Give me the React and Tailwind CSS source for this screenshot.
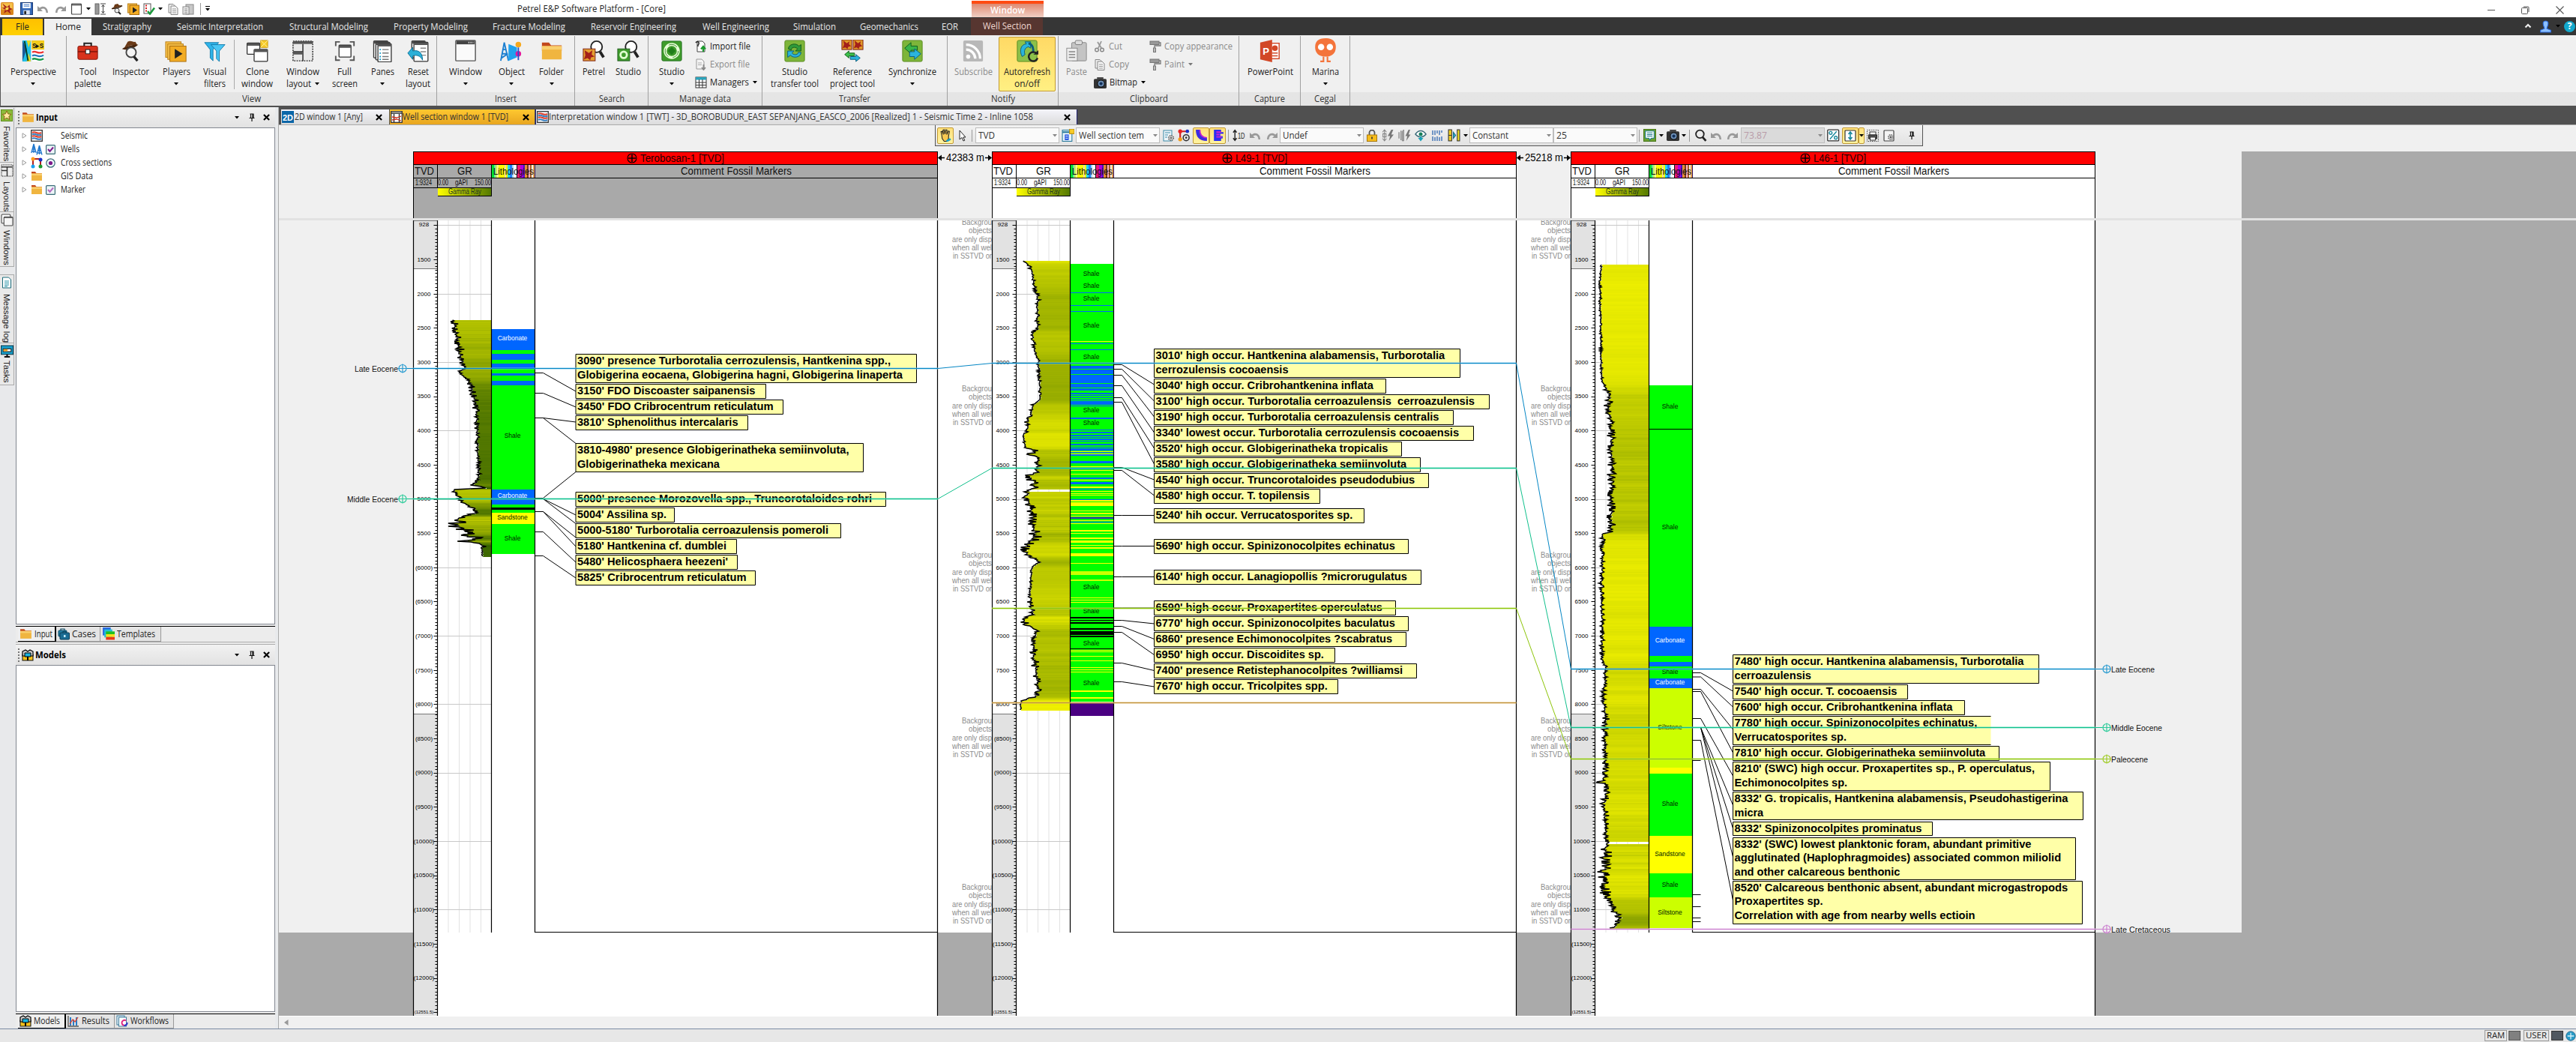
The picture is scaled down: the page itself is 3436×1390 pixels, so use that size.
import React, { useLayoutEffect, useRef } from "react";

/* ---------- text that keeps a given width ---------- */
function Fit({ w, className = "", children }) {
  const ref = useRef(null);
  useLayoutEffect(() => {
    const el = ref.current;
    el.style.transform = "none";
    const natural = el.getBoundingClientRect().width;
    if (natural > 0) el.style.transform = `scaleX(${w / natural})`;
  }, [w, children]);
  return (
    <span className={"inline-block shrink-0 whitespace-nowrap text-left " + className} style={{ width: w }}>
      <span ref={ref} className="inline-block origin-left whitespace-nowrap">{children}</span>
    </span>
  );
}

const Gap = ({ w }) => <span className="shrink-0" style={{ width: w }} />;
const Caret = ({ className = "text-black" }) => (
  <svg viewBox="0 0 6 4" className={"h-[4px] w-[6px] shrink-0 " + className}><path d="M0 0h6L3 3.6z" fill="currentColor" /></svg>
);

/* ---------- icons ---------- */
const Svg = ({ s = 30, v = 32, children, className = "" }) => (
  <svg viewBox={`0 0 ${v} ${v}`} width={s} height={s} fill="none" className={"shrink-0 " + className}>{children}</svg>
);

const PetrelMark = ({ s = 16 }) => (
  <Svg s={s} v={16}>
    <rect x="0" y="0" width="16" height="16" rx="1.5" fill="#d9861c" />
    <rect x="1" y="1" width="14" height="8" fill="#f6c04a" />
    <path d="M2 1.5L8 6l3-3 .5 4L15 8.500l-4 1.500L13 15l-5-4-4 3 1.500-5L1 7l4-.5z" fill="#a3201a" />
    <path d="M6 7l4-1-.5 3.500L6 10z" fill="#ffd94a" />
  </Svg>
);
const StudioMark = ({ s = 28 }) => (
  <Svg s={s}>
    <rect x="1" y="1" width="30" height="30" rx="2" fill="#3f9c2c" stroke="#1d6a1c" />
    <circle cx="16" cy="16" r="10" stroke="#e8ffd8" strokeWidth="4.500" />
    <circle cx="16" cy="16" r="10" stroke="#2b7d20" strokeWidth="1" strokeDasharray="14 7" />
    <path d="M16 10l6 6-6 6-6-6z" fill="#1f7d1a" />
  </Svg>
);
const Folder = ({ s = 17 }) => (
  <Svg s={s}>
    <path d="M2 4h10l3 4h15v8H2z" fill="#c2481c" />
    <path d="M2 9h28v19H2z" fill="#f0b540" />
    <path d="M2 9h28v5H2z" fill="#f9cf6d" />
  </Svg>
);
const Magnifier = ({ children }) => (
  <Svg>
    <circle cx="20" cy="10" r="8" fill="#fff" stroke="#222" strokeWidth="2" />
    <path d="M25 17l5 8" stroke="#222" strokeWidth="4" />
    {children}
  </Svg>
);
const Win = ({ x = 0, y = 0, w = 18, h = 18 }) => (
  <g transform={`translate(${x} ${y})`}>
    <rect x=".7" y=".7" width={w} height={h} rx="1" fill="#fff" stroke="#333" strokeWidth="1.400" />
    <rect x="1" y="1" width={w - 0.6} height="3.500" fill="#555" />
  </g>
);

const I = {
  perspective: (
    <Svg><rect x="1" y="1" width="12" height="30" fill="#20c0e8" /><path d="M1 1l6 12-6 18z" fill="#1b5b9c" /><path d="M7 1l3 10 3-10zM7 31l3-12 3 12z" fill="#e8d820" /><path d="M4 2l5 28" stroke="#053c20" strokeWidth="2" /><rect x="14" y="1" width="18" height="13" fill="#f4cc1c" /><text x="15" y="11.500" fontSize="10" fontWeight="bold" fontFamily="Liberation Sans" fill="#111" textLength="16" lengthAdjust="spacingAndGlyphs">S▸S</text><rect x="15" y="15" width="16" height="16" fill="#fff" /><path d="M15 18c5-4 8 4 16-1" stroke="#e33" strokeWidth="2.500" /><path d="M15 23c5-4 8 4 16-1" stroke="#27b" strokeWidth="2.500" /><path d="M15 28c5-4 8 4 16-1" stroke="#1a9a4a" strokeWidth="2.500" /></Svg>
  ),
  toolbox: (
    <Svg><path d="M11 10V5h10v5" stroke="#222" strokeWidth="2.200" /><rect x="2" y="9" width="28" height="19" rx="2" fill="#d8321c" stroke="#7d1208" /><path d="M2 17h28" stroke="#7d1208" strokeWidth="1.500" /><rect x="13" y="14" width="6" height="6" fill="#fff" stroke="#222" /></Svg>
  ),
  inspector: (
    <Svg><path d="M7 12c4-3 14-6 19-4l-3-5c-4 1-6-3-11 0z" fill="#6b3a17" /><path d="M4 13c6 3 17 0 23-6-7 0-17 2-23 6z" fill="#4a260c" /><circle cx="17" cy="18" r="7" fill="#f4f4f4" stroke="#444" strokeWidth="2" /><path d="M21 24l5 6" stroke="#222" strokeWidth="3.500" /></Svg>
  ),
  players: (
    <Svg><rect x="1" y="3" width="22" height="22" fill="#f7c04a" stroke="#b87d14" /><rect x="4" y="6" width="22" height="22" fill="#f7c04a" stroke="#b87d14" /><rect x="7" y="9" width="23" height="22" fill="#f2ac24" stroke="#a86c10" /><path d="M14 13l11 7-11 7z" fill="#222" /></Svg>
  ),
  filters: (
    <Svg><path d="M2 4h20l-8 10v16l-4-4V14z" fill="#2fb4ea" stroke="#117baa" /><path d="M11 7h20l-8 9v15l-4-4V16z" fill="#49c6f4" stroke="#117baa" /></Svg>
  ),
  clone: (
    <Svg><Win x={1} y={4} w={18} h={16} /><Win x={11} y={13} w={19} h={17} /><rect x="21" y="1" width="10" height="10" fill="#f8cc28" stroke="#c99a10" /><path d="M21 1l10 10M31 1L21 11" stroke="#fff1a8" /></Svg>
  ),
  layout: (
    <Svg><rect x="2" y="2" width="28" height="28" fill="#e9e9e9" stroke="#222" strokeWidth="1.500" strokeDasharray="2 1.500" /><rect x="2" y="2" width="28" height="4" fill="#555" /><path d="M16 6v24M2 17h14" stroke="#222" strokeWidth="1.500" /><rect x="2" y="17" width="14" height="4" fill="#555" /></Svg>
  ),
  full: (
    <Svg><path d="M3 9V3h6M23 3h6v6M29 23v6h-6M9 29H3v-6" stroke="#555" strokeWidth="2" /><Win x={7} y={7} w={17} h={17} /></Svg>
  ),
  panes: (
    <Svg><Win x={3} y={1} w={20} h={24} /><Win x={6} y={3} w={20} h={25} /><Win x={9} y={5} w={19} h={26} /><path d="M12 14h2M12 19h2M12 24h2M12 28h2" stroke="#1a9ac8" strokeWidth="2" /><path d="M16 14h9M16 19h9M16 24h9M16 28h9" stroke="#777" strokeWidth="1.500" /></Svg>
  ),
  reset: (
    <Svg><Win x={6} y={1} w={19} h={24} /><Win x={9} y={3} w={20} h={27} /><path d="M19 12h8M19 17h8M19 22h8" stroke="#888" strokeWidth="1.500" /><path d="M1 19l7-8v5c9-2 14 3 14 13-3-6-8-8-14-6v5z" fill="#2bb0d8" stroke="#0d6f94" /></Svg>
  ),
  window: (<Svg><rect x="2" y="1" width="28" height="29" rx="1" fill="#fafafa" stroke="#555" strokeWidth="1.500" /><rect x="3" y="1.500" width="26" height="5" fill="#444" /><path d="M20 4h7" stroke="#ddd" strokeDasharray="1.500 1.500" strokeWidth="2" /></Svg>),
  object: (
    <Svg><path d="M6 4L1 30M6 4l6 26M3 20h8M4 14h5M2 26l9-6" stroke="#1c7fd0" strokeWidth="2" /><path d="M12 6l12 5v14l-12 5z" fill="#1ea2ee" /><circle cx="26" cy="7" r="4" fill="#f6a81c" /><circle cx="26" cy="20" r="4" fill="#e3169c" /><path d="M26 11v18" stroke="#2255cc" strokeWidth="2" /></Svg>
  ),
  folder: <Folder s={30} />,
  petrel: (<Magnifier><g transform="translate(1 13)"><rect width="17" height="17" fill="#e4a030" stroke="#7a1a10" /><path d="M2 2l6 4 5-4-1 6 4 3-5 1-1 4-4-3-5 2 2-6z" fill="#a3201a" /></g></Magnifier>),
  studio: (<Magnifier><g transform="translate(1 13)"><rect width="17" height="17" fill="#3f9c2c" stroke="#1d5a1c" /><circle cx="8.500" cy="8.500" r="4.500" stroke="#e0ffd0" strokeWidth="3" /></g></Magnifier>),
  studioBig: <StudioMark />,
  transfer: (
    <Svg><rect x="2" y="1" width="28" height="30" rx="2" fill="#7db53a" stroke="#5a8a20" /><path d="M7 13c0-7 11-9 15-4l3-2v9h-8l3-3c-4-4-9-2-9 2z" fill="#2f9a3a" stroke="#145c1c" /><path d="M25 18c0 7-11 9-15 4l-4 3v-9h9l-3 3c4 4 9 2 9-1z" fill="#2bb4dc" stroke="#0c5c7c" /></Svg>
  ),
  reference: (
    <Svg><g transform="translate(1 0)"><rect width="14" height="14" fill="#e09a28" stroke="#7a1a10" /><path d="M2 1l5 4 4-3-1 4 3 3-4 1-1 3-3-2-4 1 2-5z" fill="#a3201a" /></g><g transform="translate(17 0)"><rect width="14" height="14" fill="#e09a28" stroke="#7a1a10" /><path d="M2 1l5 4 4-3-1 4 3 3-4 1-1 3-3-2-4 1 2-5z" fill="#a3201a" /></g><path d="M5 21l6-5v3h8v4h-8v3z" fill="#3ac04a" stroke="#145c1c" /><path d="M27 26l-6-5v3h-8v4h8v3z" fill="#2bb4dc" stroke="#0c5c7c" /></Svg>
  ),
  sync: (
    <Svg><rect x="2" y="1" width="28" height="30" rx="2" fill="#7db53a" stroke="#5a8a20" /><path d="M5 12l9-8v5h9v6h-9v5z" fill="#39b54a" stroke="#0f5a1c" /><path d="M28 20l-9-7v4h-7v7h7v4z" fill="#2bb4dc" stroke="#0c5c7c" /></Svg>
  ),
  subscribe: (
    <Svg><rect x="2" y="1" width="28" height="30" rx="2" fill="#b8b8b8" /><circle cx="9" cy="24" r="3" fill="#fff" /><path d="M6 14c7 0 13 6 13 13M6 7c11 0 20 9 20 20" stroke="#fff" strokeWidth="3.500" /></Svg>
  ),
  refresh: (
    <Svg><rect x="2" y="1" width="28" height="30" rx="2" fill="#8cc04a" stroke="#5a8a20" /><path d="M9 24C4 15 8 6 15 6l-2-3h8v9l-3-2c-5 1-7 6-5 11z" fill="#2bb4dc" stroke="#0c5c7c" /><path d="M18 5c6 2 8 8 6 14" stroke="#0c5c7c" strokeWidth="3" /><path d="M30 20a6.500 6.500 0 1 0 1 6" stroke="#222" strokeWidth="2.600" /><path d="M25 21h7v-6z" fill="#222" /></Svg>
  ),
  paste: (
    <Svg><rect x="9" y="4" width="21" height="26" rx="1.500" fill="#c4c4c4" stroke="#888" /><rect x="14" y="1" width="10" height="6" rx="2" fill="#ddd" stroke="#777" /><rect x="2" y="12" width="15" height="18" fill="#eee" stroke="#888" /><path d="M5 17h9M5 21h9M5 25h9" stroke="#888" strokeWidth="1.600" /></Svg>
  ),
  ppt: (
    <Svg><rect x="17" y="5" width="12" height="22" fill="#fff" stroke="#d24726" strokeWidth="1.500" /><circle cx="23" cy="12" r="4" fill="#d24726" /><path d="M19 19h8M19 23h8" stroke="#d24726" strokeWidth="1.600" /><path d="M2 4l17-4v32L2 28z" fill="#d24726" /><text x="5.500" y="21.500" fontSize="14" fontWeight="bold" fontFamily="Liberation Sans" fill="#fff">P</text></Svg>
  ),
  marina: (
    <Svg s={34}><path d="M16 0c9 0 13 4 13 11s-4 12-13 12S3 18 3 11 7 0 16 0z" fill="#f4743b" /><circle cx="10.500" cy="11" r="4" fill="#fff" /><circle cx="21.500" cy="11" r="4" fill="#fff" /><path d="M13.500 23v6h-4M18.500 23v6h4" stroke="#f4743b" strokeWidth="2" /></Svg>
  ),
};

const S = {
  save: (<Svg s={17} v={16}><rect x=".5" y=".5" width="15" height="15" fill="#3468b8" stroke="#1c3c78" /><rect x="3" y="1" width="10" height="6.500" fill="#fff" /><path d="M4.500 3h7M4.500 5h7" stroke="#4a7cc8" /><rect x="4" y="10" width="8" height="5.500" fill="#d8e2f2" /><rect x="5" y="11" width="2.500" height="4" fill="#222" /></Svg>),
  undo: (<Svg s={16} v={16}><path d="M1 4v7h7L5.500 8.500C9 6 12.500 8 12.500 13H15C15 5 8 2.500 3.800 6.600z" fill="#999" /></Svg>),
  redo: (<Svg s={16} v={16}><path d="M15 4v7H8l2.500-2.500C7 6 3.500 8 3.500 13H1C1 5 8 2.500 12.200 6.600z" fill="#999" /></Svg>),
  page: (<Svg s={16} v={16}><rect x="1.500" y="1" width="13" height="14" rx="1" fill="#fff" stroke="#444" strokeWidth="1.200" /><path d="M2 2.500h12" stroke="#444" strokeWidth="1.500" /></Svg>),
  height: (<Svg s={16} v={16}><rect x="1" y="1" width="5" height="14" fill="#999" stroke="#666" /><path d="M8 1h7M8 15h7M11.500 3v10M9.500 5l2-2.500 2 2.500M9.500 11l2 2.500 2-2.500" stroke="#444" /></Svg>),
  hat: (<Svg s={16} v={16}><path d="M2 7c3 0 9-2 12-4l-3 0-2-2-4 1-1 3z" fill="#6b3a17" /><path d="M1 7.500c5 0 10-1.500 14-4" stroke="#3c1e08" strokeWidth="1.500" /><circle cx="8" cy="10" r="3" fill="#eee" stroke="#444" /><path d="M10 12l3 3" stroke="#222" strokeWidth="2" /></Svg>),
  play: (<Svg s={16} v={16}><rect x=".5" y="1" width="12" height="12" fill="#f7c04a" stroke="#b87d14" /><rect x="3" y="3" width="12.500" height="12.500" fill="#f2ac24" stroke="#a86c10" /><path d="M7 5.500l6 4-6 4z" fill="#222" /></Svg>),
  check: (<Svg s={16} v={16}><rect x="1" y="1" width="9" height="13" fill="#fff" stroke="#555" /><path d="M3 3.500h2M3 7h2M3 10.500h2" stroke="#d22" strokeWidth="2" /><path d="M6 11l3 3.500 6-8" stroke="#1a9a3c" strokeWidth="2.500" /></Svg>),
  copy: (<Svg s={16} v={16}><path d="M2 1.500h6l3 3V13H2z" fill="#eee" stroke="#888" /><path d="M5 4h6l3 3v8.500H5z" fill="#f4f4f4" stroke="#888" /><path d="M7 8h5M7 10.500h5M7 13h5" stroke="#999" /></Svg>),
  clip: (<Svg s={16} v={16}><rect x="5" y="2" width="10" height="13" fill="#c8c8c8" stroke="#888" /><rect x="1" y="5" width="8" height="10" fill="#eee" stroke="#888" /><path d="M3 8h4M3 10.500h4M3 13h4" stroke="#888" /></Svg>),
  imp: (<Svg s={16} v={16}><path d="M3 1h7l3 3v11H3z" fill="#fff" stroke="#444" /><path d="M11 15V9M8 11.500L11 8l3 3.500" stroke="#1a9a2c" strokeWidth="2.200" /><path d="M1 3c3-4 6 1 3 3v2" stroke="#222" strokeWidth="1.500" /></Svg>),
  exp: (<Svg s={16} v={16}><path d="M2 1h7l3 3v10H2z" fill="#f4f4f4" stroke="#999" /><path d="M4 6h5M4 8.500h5" stroke="#aaa" /><path d="M11.500 8v6M9 12l2.500 3 2.500-3" stroke="#888" strokeWidth="1.800" /></Svg>),
  grid: (<Svg s={16} v={16}><rect x="1" y="1" width="14" height="14" fill="#fff" stroke="#333" /><rect x="1" y="1" width="14" height="3.500" fill="#2ba4bc" /><path d="M1 8h14M1 11.500h14M5.500 4v11M10 4v11" stroke="#333" /></Svg>),
  cut: (<Svg s={16} v={16}><path d="M10 1L6 10M5 2l5 8" stroke="#999" strokeWidth="1.800" /><circle cx="4" cy="12.500" r="2.300" stroke="#888" strokeWidth="1.400" /><circle cx="11" cy="12.500" r="2.300" stroke="#888" strokeWidth="1.400" /></Svg>),
  camera: (<Svg s={17} v={16}><rect x="0" y="3" width="16" height="12" rx="1.500" fill="#333" /><rect x="4" y="1" width="8" height="3" fill="#444" /><circle cx="9" cy="9" r="4.300" fill="#6d8fb5" stroke="#111" /><circle cx="9" cy="9" r="2" fill="#12305a" /></Svg>),
  roller: (<Svg s={16} v={16}><rect x="1" y="1" width="12" height="4.500" fill="#999" stroke="#777" /><path d="M13 3h2v4H7v3" stroke="#777" strokeWidth="1.300" /><rect x="5.500" y="10" width="3" height="5.500" fill="#bbb" stroke="#777" /></Svg>),
  star: (<Svg s={16} v={16}><rect x=".5" y=".5" width="15" height="15" fill="#8cbc3c" stroke="#5f8c1c" /><path d="M8 2l1.800 4 4.200.4-3.200 2.800 1 4.300L8 11.200 4.200 13.500l1-4.300L2 6.400 6.200 6z" fill="#ffe9a0" stroke="#8a5a10" strokeWidth=".9" /></Svg>),
  layouts: (<Svg s={17} v={16}><rect x="1" y="1" width="14" height="14" fill="#eee" stroke="#000" strokeDasharray="1 1" /><path d="M1 3.500h14M8 4v11M1 8h7" stroke="#333" strokeWidth="1.400" /></Svg>),
  windows: (<Svg s={17} v={16}><rect x="1" y="1" width="11" height="11" rx="1" fill="#fff" stroke="#444" /><rect x="4" y="4" width="11" height="11" rx="1" fill="#f6f6f6" stroke="#444" /><path d="M4 5h11" stroke="#444" /></Svg>),
  doc: (<Svg s={16} v={16}><path d="M2.500 1h8l3 3v11h-11z" fill="#fff" stroke="#1a6a7a" /><path d="M5 6h6M5 8.500h6M5 11h6M5 13h4" stroke="#1a8aa0" /></Svg>),
  tasks: (<Svg s={17} v={16}><rect x=".5" y="1" width="15" height="11" fill="#18a0cc" stroke="#0a3a4c" /><rect x="3" y="5" width="10" height="3.500" fill="#fff" stroke="#222" /><rect x="3.500" y="5.500" width="5" height="2.500" fill="#f0a020" /><path d="M8 12v3M4.500 15h7" stroke="#111" strokeWidth="2" /></Svg>),
  seismic: (<Svg s={16} v={16}><rect x=".7" y=".7" width="14.600" height="14.600" fill="#fff" stroke="#333" strokeWidth="1.300" /><path d="M2 4c4-3 7 3 12 0M2 9c4-3 7 3 12 0" stroke="#e0402c" strokeWidth="2.200" /><path d="M2 6.500c4-3 7 3 12 0M2 12c4-3 7 3 12 0" stroke="#3a80c0" strokeWidth="2.200" /></Svg>),
  wells: (<Svg s={16} v={16}><path d="M4 1L.8 13M4 1l3.200 12M4 1v12M2 8h4M1 11h6" stroke="#1f76cc" strokeWidth="1.300" /><path d="M11.500 3L8 15.500M11.500 3L15 15.500M11.500 3v12M9.500 10h4M8.500 13h6" stroke="#1f76cc" strokeWidth="1.300" /></Svg>),
  cross: (<Svg s={16} v={16}><path d="M3 13V3h10v10" stroke="#b02020" strokeWidth="2" /><circle cx="3" cy="3" r="2.500" fill="#ff9c1a" /><circle cx="13" cy="4" r="2.500" fill="#1a30c8" /><circle cx="3" cy="13" r="2.500" fill="#1aa0f0" /><circle cx="13" cy="13" r="2.500" fill="#1a9a2c" /></Svg>),
  cases: (<Svg s={16} v={16}><rect x="1" y="3" width="11" height="8" rx="1" fill="#2482a8" stroke="#0c4a66" /><path d="M4 3V1h5v2M7 6V4.500h4V6" stroke="#0c4a66" strokeWidth="1.200" /><rect x="3" y="6" width="12.500" height="9" rx="1" fill="#1a6d94" stroke="#0a3c54" /><rect x="8" y="9" width="2.500" height="3" fill="#bfe8f8" /></Svg>),
  templates: (<Svg s={17} v={16}><rect x="1" y="0" width="10" height="10" fill="#2a6ae0" /><rect x="3" y="2.500" width="10" height="10" fill="#20c0d8" /><rect x="5" y="5" width="11" height="3.500" fill="#20c020" /><rect x="5" y="8.500" width="11" height="3.500" fill="#f6e01c" /><rect x="5" y="12" width="11" height="3.500" fill="#e83818" /></Svg>),
  models: (<Svg s={16} v={16}><rect x="1" y="7" width="14" height="8" fill="#f4c01c" stroke="#111" /><path d="M1 3l4-2 3 2 3-2 4 2v6H1z" fill="#ccc" stroke="#000" strokeWidth="1.200" /><path d="M4 5h8v5H4z" fill="#18b4e0" stroke="#000" /><path d="M8 10v5" stroke="#000" strokeWidth="2" /></Svg>),
  results: (<Svg s={16} v={16}><path d="M1 1v14h14" stroke="#555" strokeWidth="1.300" /><path d="M3 3h2v11H3zM7 6h2v8H7zM11 3h2v11h-2z" fill="#2a7cc8" /><path d="M3 12l4-6 3 3 4-6" stroke="#e0402c" strokeWidth="1.300" /></Svg>),
  workflows: (<Svg s={16} v={16}><rect x="1" y="1" width="10" height="12" fill="#eef6fa" stroke="#3a7a9c" /><rect x="3.500" y="3" width="10" height="12" fill="#fff" stroke="#3a7a9c" /><path d="M13 7.500a3.500 3.500 0 1 0 1.500 3" stroke="#e02880" strokeWidth="2" /><path d="M14.500 10a3.500 3.500 0 0 1-4 4" stroke="#2040d0" strokeWidth="2" /></Svg>),
  twoD: (<Svg s={16} v={16}><rect width="16" height="16" fill="#0b66a8" /><text x="1" y="12.500" fontSize="11.500" fontWeight="bold" fontFamily="Liberation Sans" fill="#fff" textLength="14" lengthAdjust="spacingAndGlyphs">2D</text></Svg>),
  wellsec: (<Svg s={16} v={16}><rect x=".7" y=".7" width="14.600" height="14.600" fill="#fff" stroke="#333" strokeWidth="1.300" /><path d="M1 3h14" stroke="#333" strokeWidth="1.500" /><path d="M4.500 4v11M11.500 4v11" stroke="#222" strokeWidth="1.300" /><path d="M2 8l6 1 6-2M2 12l6-1 6 2" stroke="#d03020" strokeWidth="1.300" /></Svg>),
  hand: (<Svg s={17} v={16}><path d="M3 8L2 3.500l1.500-.5L5 7l-.5-5.500L6 1l1 5.500L8 1l1.500.3L9.300 7l2-4.500 1.300.7L11.500 9v3l-2 3.500H6L3.500 12z" fill="#f8c850" stroke="#222" strokeWidth="1" /><path d="M9 15.500l5-3" stroke="#18a0cc" strokeWidth="2.500" /></Svg>),
  cursor: (<Svg s={16} v={16}><path d="M5 1v12l3-2.500L10 15l1.800-.8L9.800 10H13z" fill="#fff" stroke="#222" /></Svg>),
  tpl: (<Svg s={17} v={16}><rect x="1" y="1.500" width="12" height="14" fill="#e8f4fa" stroke="#2a7a9c" /><path d="M1 4h12" stroke="#2a7a9c" strokeWidth="2" /><rect x="4" y="7" width="5" height="7" fill="#2050e0" /><path d="M5 9h3M5 11.500h3" stroke="#fff" /><rect x="10" y="0" width="6" height="6" fill="#f8cc28" stroke="#b88a10" /></Svg>),
  tplGear: (<Svg s={16} v={16}><rect x="1" y="1" width="11" height="14" fill="#eef6fa" stroke="#3a8aa8" /><path d="M3 4h7M3 7h4M3 10h3" stroke="#3a8aa8" /><circle cx="11" cy="11" r="3.200" fill="#ddd" stroke="#666" strokeWidth="1.800" strokeDasharray="1.500 1" /><circle cx="11" cy="11" r="1.300" fill="#666" /></Svg>),
  crossGear: (<Svg s={17} v={16}><path d="M3 13V3h9" stroke="#d02020" strokeWidth="2" /><circle cx="3" cy="3" r="2.500" fill="#e82020" /><circle cx="12" cy="3" r="2.200" fill="#1a30c8" /><circle cx="3" cy="13" r="2.500" fill="#f09c1a" /><circle cx="10.500" cy="11" r="3.700" fill="#eee" stroke="#333" strokeWidth="1.500" /><circle cx="10.500" cy="11" r="1.300" fill="#333" /></Svg>),
  curve: (<Svg s={17} v={16}><path d="M1 1h5c0 6 2 10 9 10v4C5 15 1 10 1 1z" fill="#3c2ce0" /><path d="M6 1c0 6 2 10 9 10" stroke="#c020d0" strokeWidth="1.500" /></Svg>),
  hist: (<Svg s={17} v={16}><path d="M3 1h9v3h3v2h-4v3h3v3h-2v3H3z" fill="#2a30f0" /><path d="M6 4h6M6 7h4M6 10h7" stroke="#d020d0" strokeWidth="1.800" /></Svg>),
  oneD: (<Svg s={17} v={16}><path d="M3 2v12M.8 4.500L3 1.500l2.200 3M.8 11.500L3 14.500l2.200-3" stroke="#222" strokeWidth="1.300" /><text x="6.500" y="12" fontSize="9.500" fontFamily="Liberation Sans" fill="#222" textLength="9" lengthAdjust="spacingAndGlyphs">1D</text></Svg>),
  lock: (<Svg s={16} v={16}><path d="M4.500 7V4a3.500 3.500 0 0 1 7 0v3" stroke="#555" strokeWidth="1.800" /><rect x="1.500" y="7" width="13" height="8.500" fill="#f6bc1c" stroke="#a8780c" /><path d="M8 9.500v3" stroke="#333" strokeWidth="1.600" /></Svg>),
  bolt1: (<Svg s={17} v={16}><path d="M3.500 1v14M1 4l2.500-3L6 4M1 12l2.500 3L6 12M1.500 6h4v4h-4z" stroke="#888" /><path d="M12 1L7.500 9h3L9 15l6-8h-3l2.500-6z" fill="#777" /></Svg>),
  bolt2: (<Svg s={17} v={16}><path d="M1 4v8M3.500 2v12" stroke="#888" strokeWidth="1.300" /><path d="M7 1v14H5V3z" fill="#aaa" stroke="#777" strokeWidth=".7" /><path d="M13 1L9 9h2.500L10 15l5.500-8H13l2-6z" fill="#777" /></Svg>),
  eye: (<Svg s={16} v={16}><path d="M1 6c4-6 10-6 14 0-4 5-10 5-14 0z" fill="#fff" stroke="#3a6a78" strokeWidth="1.500" /><circle cx="8" cy="6" r="2.500" fill="#18805c" /><path d="M4.500 11H7V9h2v2h2.500L8 15.500z" fill="#18a0b8" /></Svg>),
  bars: (<Svg s={16} v={16}><path d="M2 1v6M5 1v6M8 1v4M11 1v6M14 1v3M2 9v6M5 10v5M8 9v6M11 10v5M14 9v6" stroke="#4a7ab8" strokeWidth="1.500" /></Svg>),
  flow: (<Svg s={17} v={16}><rect x="1" y="1" width="4" height="14" fill="#f4d020" stroke="#333" /><path d="M1 8h4" stroke="#333" /><path d="M7 4l3 4-3 4z" fill="#28b0d0" stroke="#1a6a80" /><rect x="12" y="1" width="3" height="14" fill="#f4e020" stroke="#333" /></Svg>),
  note: (<Svg s={17} v={16}><rect x=".5" y=".5" width="15" height="15" fill="#6ca030" stroke="#4a7a1c" /><path d="M2.500 2.500h11v9H10l-2 2.500-1-2.500H2.500z" fill="#fff" stroke="#18788c" /><path d="M4.500 5h7M4.500 7h7M4.500 9h7" stroke="#18788c" /></Svg>),
  search: (<Svg s={17} v={16}><circle cx="7" cy="6.500" r="5" stroke="#222" strokeWidth="1.700" /><path d="M10.500 10.500l4 4.500" stroke="#222" strokeWidth="2.600" /></Svg>),
  pct: (<Svg s={17} v={16}><rect x=".7" y="1" width="14" height="14" rx="1" fill="#fff" stroke="#333" strokeWidth="1.200" /><circle cx="4.500" cy="5" r="1.800" stroke="#18889c" strokeWidth="1.300" /><circle cx="11" cy="11" r="1.800" stroke="#18889c" strokeWidth="1.300" /><path d="M12 3L3.500 13" stroke="#18889c" strokeWidth="1.300" /></Svg>),
  vfit: (<Svg s={16} v={16}><rect x="1" y="1" width="14" height="14" rx="1" fill="#fff" stroke="#333" strokeWidth="1.200" /><path d="M8 3.500v9M5.500 6L8 3l2.500 3M5.500 10L8 13l2.500-3" stroke="#18889c" strokeWidth="1.600" /></Svg>),
  print: (<Svg s={16} v={16}><rect x=".5" y=".5" width="15" height="15" stroke="#222" strokeDasharray="1 1.500" /><rect x="4" y="3" width="8" height="4" fill="#fff" stroke="#333" /><rect x="2.500" y="7" width="11" height="5" fill="#555" stroke="#222" /><rect x="4.500" y="10" width="7" height="4" fill="#fff" stroke="#333" /></Svg>),
  pageGear: (<Svg s={16} v={16}><rect x="1" y="1" width="13" height="14" rx="1" fill="#f4f4f4" stroke="#444" strokeWidth="1.200" /><circle cx="10" cy="10" r="3.200" fill="#ccc" stroke="#777" strokeWidth="1.800" strokeDasharray="1.500 1" /><circle cx="10" cy="10" r="1.200" fill="#555" /></Svg>),
  pin: (<Svg s={12} v={12}><path d="M3.500 1h5M4.500 1v5.500M8 1v5.500M7 1v5M2.500 6.500h7M6 6.500V11" stroke="#111" strokeWidth="1.200" /></Svg>),
  close: (<Svg s={9} v={10}><path d="M1 1l8 8M9 1L1 9" stroke="#000" strokeWidth="2.400" /></Svg>),
};

/* ---------- title bar and ribbon tabs ---------- */
function TitleBar() {
  return (
    <div className="relative flex h-[23px] w-full items-center bg-white">
      <Gap w={1} /><PetrelMark s={17} /><Gap w={9} />{S.save}<Gap w={5} />{S.undo}<Gap w={8} />{S.redo}<Gap w={5} />{S.page}
      <Gap w={5} /><Caret /><Gap w={5} />{S.height}<Gap w={6} />{S.hat}<Gap w={6} />{S.play}<Gap w={5} />{S.check}<Gap w={4} /><Caret />
      <Gap w={6} />{S.copy}<Gap w={4} />{S.clip}<Gap w={8} /><span className="h-[16px] w-px bg-[#999]" /><Gap w={6} />
      <span className="flex flex-col items-center gap-[2px]"><span className="h-px w-[6px] bg-black" /><Caret /></span>
      <Gap w={410} />
      <Fit w={198} className="text-[12px] text-[#222]">Petrel E&P Software Platform - [Core]</Fit>
      <Gap w={408} />
      <div className="mt-px flex h-[22px] w-[96px] items-center justify-center border-t-4 border-[#ff4b12] bg-linear-to-b from-[#de8a72] to-[#f0cfc4]">
        <Fit w={46} className="text-[12px] font-semibold text-white">Window</Fit>
      </div>
      <div className="ml-auto flex items-center pr-[16px] pt-[4px] text-[#555]">
        <span className="h-px w-[10px] bg-[#555]" /><Gap w={35} />
        <Svg s={11} v={11}><rect x=".5" y="2.500" width="8" height="8" rx="1" stroke="#555" /><path d="M3 1h6a1 1 0 0 1 1 1v6" stroke="#555" /></Svg><Gap w={35} />
        <Svg s={11} v={11}><path d="M.5.5l10 10M10.500.5l-10 10" stroke="#555" strokeWidth="1.100" /></Svg>
      </div>
    </div>
  );
}

const TABS = [["Stratigraphy", 65], ["Seismic Interpretation", 115], ["Structural Modeling", 105], ["Property Modeling", 99], ["Fracture Modeling", 97], ["Reservoir Engineering", 114], ["Well Engineering", 89], ["Simulation", 57], ["Geomechanics", 78], ["EOR", 22]];
const TAB_GAPS = [15, 34, 35, 34, 33, 34, 35, 32, 32, 31];

function TabBar() {
  return (
    <div className="flex h-[24px] w-full items-center bg-[#363636] text-[12px] text-[#e6e6e6]">
      <div className="ml-[3px] mt-[2px] flex h-[22px] w-[54px] items-center justify-center bg-linear-to-b from-[#ffc000] to-[#ffd000] text-[#222]"><Fit w={18}>File</Fit></div>
      <div className="ml-[2px] mt-[2px] flex h-[22px] w-[63px] items-center justify-center bg-[#f0f0f0] text-[#222]"><Fit w={34}>Home</Fit></div>
      {TABS.map(([t, w], i) => (
        <React.Fragment key={t}><Gap w={TAB_GAPS[i]} /><Fit w={w} className="mt-px">{t}</Fit></React.Fragment>
      ))}
      <Gap w={17} />
      <div className="flex h-[23px] w-[96px] items-center justify-center bg-[#573630] text-[#f0d8d0]"><Fit w={65}>Well Section</Fit></div>
      <div className="ml-auto flex items-center pr-[1px]">
        <Svg s={10} v={10}><path d="M1.500 6.500L5 3l3.500 3.500" stroke="#eee" strokeWidth="2.200" /></Svg><Gap w={10} />
        <Svg s={17} v={16}><path d="M8 1c3 0 3.500 2 3 4.500S9.500 9 9.500 10.500l5 2V15h-13v-2.500l5-2C6.500 9 5.500 8 5 5.500S5 1 8 1z" fill="#8cc0ff" stroke="#2a6ae0" /></Svg>
        <Gap w={5} /><Caret /><Gap w={5} />
        <span className="flex h-[15px] w-[15px] items-center justify-center rounded-full bg-[#12a8cc] text-[12px] font-bold text-white">?</span>
      </div>
    </div>
  );
}

/* ---------- ribbon ---------- */
function Big({ w, icon, a, aw, b, bw, caret, inlineCaret, gray, hot }) {
  return (
    <div className={"flex h-[73px] shrink-0 flex-col items-center text-[12px] leading-[16px] " + (gray ? "text-[#8a8a8a]" : "text-[#222]") + (hot ? " rounded-[2px] bg-linear-to-b from-[#ffd964] to-[#fff083] outline outline-1 -outline-offset-1 outline-[#c29a35]" : "")} style={{ width: w }}>
      <div className="mt-[3px] flex h-[32px] items-center justify-center">{I[icon]}</div>
      <div className="mt-[4px] h-[16px]"><Fit w={aw}>{a}</Fit></div>
      <div className="flex h-[16px] items-center">{b && <Fit w={bw}>{b}</Fit>}{inlineCaret && <><Gap w={5} /><Caret /></>}{caret && <Caret />}</div>
    </div>
  );
}
function Small({ icon, t, w, gray, caret }) {
  return (
    <div className={"flex h-[24px] items-center text-[12px] " + (gray ? "text-[#8a8a8a]" : "text-[#222]")}>
      {S[icon]}<Gap w={4} /><Fit w={w}>{t}</Fit>{caret && <><Gap w={5} /><Caret className={gray ? "text-[#777]" : "text-black"} /></>}
    </div>
  );
}
function Group({ w, label, lw, children }) {
  return (
    <div className="h-full shrink-0 pt-px" style={{ width: w }}>
      <div className="flex h-[93px] flex-col border-r border-[#a0a0a0]">
        <div className="flex h-[75px] pt-px">{children}</div>
        <div className="flex h-[18px] items-center justify-center text-[12px] text-[#333]">{label && <Fit w={lw}>{label}</Fit>}</div>
      </div>
    </div>
  );
}
function Ribbon() {
  return (
    <div className="flex h-[94px] w-full bg-linear-to-b from-[#f0f0f0] from-81% to-[#e5e5e5] to-81% border-l border-[#555]">
      <Group w={88}><Gap w={0} /><Big w={86} icon="perspective" a="Perspective" aw={61} caret /></Group>
      <Group w={494} label="View" lw={25}>
        <Big w={56} icon="toolbox" a="Tool" aw={23} b="palette" bw={36} /><Big w={58} icon="inspector" a="Inspector" aw={49} />
        <Big w={64} icon="players" a="Players" aw={37} caret /><Big w={38} icon="filters" a="Visual" aw={31} b="filters" bw={29} />
        <div className="flex w-[14px] justify-center py-[4px]"><span className="w-px bg-[#aaa]" /></div>
        <Big w={48} icon="clone" a="Clone" aw={31} b="window" bw={42} /><Big w={74} icon="layout" a="Window" aw={44} b="layout" bw={33} inlineCaret />
        <Big w={37} icon="full" a="Full" aw={19} b="screen" bw={34} /><Big w={64} icon="panes" a="Panes" aw={31} caret /><Big w={31} icon="reset" a="Reset" aw={28} b="layout" bw={33} />
      </Group>
      <Group w={184} label="Insert" lw={29}>
        <Big w={76} icon="window" a="Window" aw={44} caret /><Big w={46} icon="object" a="Object" aw={35} caret /><Big w={61} icon="folder" a="Folder" aw={33} caret />
      </Group>
      <Group w={98} label="Search" lw={34}>
        <Big w={50} icon="petrel" a="Petrel" aw={30} /><Big w={42} icon="studio" a="Studio" aw={34} />
      </Group>
      <Group w={152} label="Manage data" lw={69}>
        <Big w={62} icon="studioBig" a="Studio" aw={34} caret />
        <div className="pt-px"><Small icon="imp" t="Import file" w={54} /><Small icon="exp" t="Export file" w={53} gray /><Small icon="grid" t="Managers" w={52} caret /></div>
      </Group>
      <Group w={247} label="Transfer" lw={42}>
        <Big w={86} icon="transfer" a="Studio" aw={34} b="transfer tool" bw={64} /><Big w={68} icon="reference" a="Reference" aw={52} b="project tool" bw={60} /><Big w={92} icon="sync" a="Synchronize" aw={64} caret />
      </Group>
      <Group w={148} label="Notify" lw={32}>
        <Big w={68} icon="subscribe" a="Subscribe" aw={51} gray /><Big w={76} icon="refresh" a="Autorefresh" aw={62} b="on/off" bw={34} hot />
      </Group>
      <Group w={241} label="Clipboard" lw={51}>
        <Big w={47} icon="paste" a="Paste" aw={28} gray />
        <div className="w-[74px] pt-px"><Small icon="cut" t="Cut" w={18} gray /><Small icon="copy" t="Copy" w={27} gray /><Small icon="camera" t="Bitmap" w={37} caret /></div>
        <div className="pt-px"><Small icon="roller" t="Copy appearance" w={91} gray /><Small icon="roller" t="Paint" w={27} gray caret /></div>
      </Group>
      <Group w={82} label="Capture" lw={41}><Big w={82} icon="ppt" a="PowerPoint" aw={61} /></Group>
      <Group w={66} label="Cegal" lw={29}><Big w={65} icon="marina" a="Marina" aw={36} caret /></Group>
    </div>
  );
}

/* ---------- left side ---------- */
const RAIL = [["star", "Favorites", 73, 6], ["layouts", "Layouts", 66, 6], ["windows", "Windows", 73, 5], null, ["doc", "Message log", 91, 7], ["tasks", "Tasks", 56, 4]];
function Rail() {
  return (
    <div className="h-full w-[21px] bg-[#e8e9eb] pt-px font-['Liberation_Sans',sans-serif]">
      {RAIL.map((r, i) =>
        r ? (
          <div key={i} className="flex w-[19px] flex-col items-center border-b border-r border-[#aaa] bg-[#e9e9e9] pt-[2px]" style={{ height: r[2] }}>
            {S[r[0]]}
            <span className="whitespace-nowrap text-[11.500px] leading-[14px] text-[#222] [writing-mode:vertical-rl]" style={{ marginTop: r[3] }}>{r[1]}</span>
          </div>
        ) : <div key={i} className="h-[11px] w-[19px] border-b border-[#aaa]" />
      )}
    </div>
  );
}
const Head = ({ icon, t, w }) => (
  <div className="flex h-full items-center bg-linear-to-b from-[#f2f2f2] to-[#e2e2e2] pl-[3px] text-[12px] font-bold">
    <span className="h-[18px] w-0 border-l-2 border-dotted border-[#777]" /><Gap w={3} />{icon}<Gap w={2} /><Fit w={w}>{t}</Fit>
    <div className="ml-auto flex items-center pr-[7px]"><Caret /><span className="w-[3px]" /><Gap w={8} />{S.pin}<Gap w={9} />{S.close}</div>
  </div>
);
const Tree = ({ icon, box, t, w }) => (
  <div className="flex h-[18px] items-center text-[12px] text-[#222]">
    <Gap w={7} /><Svg s={8} v={8}><path d="M1 .8v6.400l5-3.200z" stroke="#999" /></Svg><Gap w={4} />{icon}<Gap w={4} />
    <span className="flex w-[13px] shrink-0">{box}</span><Gap w={7} /><Fit w={w}>{t}</Fit>
  </div>
);
const CheckBox = ({ c = "#7d1a8c" }) => (<Svg s={13} v={13}><rect x=".6" y=".6" width="11.800" height="11.800" rx="1" fill="#eef6f8" stroke="#3a6c78" strokeWidth="1.200" /><path d="M3 6l2.500 3L10 3.500" stroke={c} strokeWidth="2" /></Svg>);
const BTab = ({ icon, t, w, tw, on }) => (
  <div className={"flex h-full items-center text-[12px] text-[#222] " + (on ? "border-b border-r-2 border-black bg-[#efefef]" : "border-b border-r border-[#999] bg-[#e4e4e4]")} style={{ width: w }}>
    <Gap w={2} />{icon}<Gap w={3} /><Fit w={tw}>{t}</Fit>
  </div>
);
function LeftPanels() {
  return (
    <div className="flex h-full w-[346px] flex-col bg-[#ececec]">
      <div className="h-[27px]"><Head icon={<Folder />} t="Input" w={29} /></div>
      <div className="h-[663px] border border-[#828790] bg-white pt-[1px]">
        <Tree icon={S.seismic} t="Seismic" w={36} />
        <Tree icon={S.wells} box={<CheckBox />} t="Wells" w={25} />
        <Tree icon={S.cross} box={<Svg s={13} v={13}><circle cx="6.500" cy="6.500" r="5.700" fill="#eef6f8" stroke="#3a6c78" strokeWidth="1.200" /><circle cx="6.500" cy="6.500" r="2.600" fill="#7d1a8c" /></Svg>} t="Cross sections" w={68} />
        <Tree icon={<Folder s={16} />} t="GIS Data" w={43} />
        <Tree icon={<Folder s={16} />} box={<CheckBox c="#b46cc0" />} t="Marker" w={33} />
      </div>
      <div className="mt-[2px] flex h-[21px] border-t border-black pl-[3px]">
        <BTab on w={51} icon={<Folder />} t="Input" tw={24} /><BTab w={59} icon={S.cases} t="Cases" tw={32} /><BTab w={81} icon={S.templates} t="Templates" tw={51} />
      </div>
      <div className="h-px bg-[#aaa]" />
      <div className="mt-[2px] h-[28px] border-t border-[#aaa]"><Head icon={S.models} t="Models" w={41} /></div>
      <div className="h-[463px] border border-[#828790] bg-white" />
      <div className="mt-[2px] flex h-[20px] border-t border-black pl-[3px]">
        <BTab on w={64} icon={S.models} t="Models" tw={35} /><BTab w={65} icon={S.results} t="Results" tw={37} /><BTab w={79} icon={S.workflows} t="Workflows" tw={51} />
      </div>
    </div>
  );
}

/* ---------- document tabs and tool strip ---------- */
function DocTabs() {
  return (
    <div className="flex h-[24px] w-full shrink-0 items-end border-b border-[#aaa] bg-[#505050] pl-[3px] text-[12px] text-[#333]">
      <div className="flex h-[20px] w-[144px] items-center bg-linear-to-b from-[#f4f4fa] to-[#dcdcdc] pl-[1px]">{S.twoD}<Gap w={1} /><Fit w={91}>2D window 1 [Any]</Fit><Gap w={17} />{S.close}</div>
      <div className="ml-px flex h-[20px] w-[193px] items-center bg-linear-to-b from-[#ffc830] to-[#e8a620] pl-[1px]">{S.wellsec}<Fit w={141}>Well section window 1 [TVD]</Fit><Gap w={19} />{S.close}</div>
      <div className="ml-px flex h-[20px] w-[723px] items-center border-l border-r border-[#1a1a6c] bg-linear-to-b from-[#f4f4fa] to-[#dcdcdc] pl-[1px]">{S.seismic}<Fit w={646}>Interpretation window 1 [TWT] - 3D_BOROBUDUR_EAST SEPANJANG_EASCO_2006 [Realized] 1 - Seismic Time 2 - Inline 1058</Fit><Gap w={41} />{S.close}</div>
    </div>
  );
}
const Combo = ({ t, tw, off }) => (
  <div className={"flex h-[21px] w-[112px] shrink-0 items-center border border-[#bdbdbd] pl-[3px] pr-[2px] text-[12px] " + (off ? "bg-[#dadada] text-[#b89aa8]" : "bg-[#fafafa] text-[#333]")}>
    <Fit w={tw}>{t}</Fit><span className="ml-auto flex"><Caret className="text-[#888]" /></span>
  </div>
);
const Sep = () => <span className="h-[16px] w-px shrink-0 bg-[#999]" />;
const Hot = ({ w, children }) => (
  <span className="flex h-[22px] shrink-0 items-center justify-center rounded-[2px] border border-[#c29a35] bg-linear-to-b from-[#ffe07a] to-[#fff3a0]" style={{ width: w }}>{children}</span>
);
function ToolStrip() {
  return (
    <div className="ml-[875px] flex h-[28px] w-[1318px] shrink-0 items-center border-b border-l border-r border-[#555] bg-linear-to-b from-[#f2f2f2] to-[#e2e2e2] pl-[2px]">
      <Hot w={22}>{S.hand}</Hot><Gap w={3} />{S.cursor}<Gap w={5} /><Sep /><Gap w={4} /><Combo t="TVD" tw={22} /><Gap w={3} />{S.tpl}<Gap w={2} />
      <Combo t="Well section tem" tw={87} /><Gap w={4} />{S.tplGear}<Gap w={4} />{S.crossGear}<Gap w={3} /><Hot w={22}>{S.curve}</Hot><Hot w={22}>{S.hist}</Hot><Gap w={3} /><Sep /><Gap w={5} />
      {S.oneD}<Gap w={5} />{S.undo}<Gap w={7} />{S.redo}<Gap w={2} /><Combo t="Undef" tw={33} /><Gap w={3} />{S.lock}<Gap w={5} />{S.bolt1}<Gap w={5} />{S.bolt2}<Gap w={5} />{S.eye}<Gap w={6} />{S.bars}<Gap w={6} />{S.flow}<Gap w={4} /><Caret /><Gap w={2} />
      <Combo t="Constant" tw={48} /><Combo t="25" tw={14} /><Gap w={2} /><Sep /><Gap w={5} />{S.note}<Gap w={4} /><Caret /><Gap w={4} />{S.camera}<Gap w={3} /><Caret /><Gap w={4} /><Sep /><Gap w={6} />
      {S.search}<Gap w={4} />{S.undo}<Gap w={6} />{S.redo}<Gap w={3} /><Combo t="73.87" tw={31} off /><Gap w={3} />{S.pct}<Gap w={3} />
      <Hot w={22}>{S.vfit}</Hot><Hot w={8}><Caret /></Hot><Gap w={3} />{S.print}<Gap w={6} />{S.pageGear}<Gap w={16} />{S.pin}
    </div>
  );
}

/* ---------- well headers ---------- */
const LSTRIPES = [["#00e030", 3], ["#60e8a0", 2], ["#c8f060", 2], ["#f8f890", 2], ["#ffff00", 8], ["#f0d8a0", 2], ["#ffff00", 2], ["#20d8f0", 3], ["#2080ff", 3], ["#a0d8ff", 2], ["#ffffff", 4], ["#101010", 1], ["#f01878", 4], ["#b000e0", 4], ["#5010c0", 2], ["#e89030", 3], ["#7a3a1a", 2], ["#ffb0c0", 2], ["#a8602a", 2], ["#f8f0e0", 2], ["#e8a050", 2], ["#301060", 1]];
const WellHeader = ({ name, nw, dark }) => (
  <div className={"h-[89px] w-[700px] shrink-0 border-l border-r border-black font-['Liberation_Sans',sans-serif] text-[#111] " + (dark ? "bg-[#a9a9a9]" : "bg-white")}>
    <div className="flex h-[18px] items-center justify-center border-y border-black bg-[#ff0000] text-[14px] text-[#200]">
      <Svg s={14} v={14}><circle cx="7" cy="7" r="6" stroke="#000" strokeWidth="1.100" /><path d="M7 2v10M2 7h10" stroke="#000" strokeWidth="1.500" /></Svg><Gap w={4} /><Fit w={nw}>{name}</Fit>
    </div>
    <div className="flex h-[18px] items-center border-b border-black text-[14px]">
      <div className="flex h-full w-[32px] items-center border-r border-black pl-px"><Fit w={26}>TVD</Fit></div>
      <div className="flex h-full w-[72px] items-center justify-center border-r border-black"><Fit w={20}>GR</Fit></div>
      <div className="relative flex h-full w-[58px] items-center">
        {LSTRIPES.map(([c, w], i) => <span key={i} className="h-full" style={{ width: w, background: c }} />)}
        <span className="absolute left-[2px] top-0 leading-[17px]"><Fit w={54} className="text-[13px]">Lithologies</Fit></span>
      </div>
      <div className="flex flex-1 justify-center"><Fit w={148}>Comment Fossil Markers</Fit></div>
    </div>
    <div className="flex text-[10px] leading-[11px]">
      <div className="h-[13px] w-[32px] border-b border-r border-black pl-[2px]"><Fit w={22}>1:9324</Fit></div>
      <div className="w-[72px] border-r border-black">
        <div className="flex h-[12px] justify-between"><Fit w={14}>0.00</Fit><Fit w={17}>gAPI</Fit><Fit w={22}>150.00</Fit></div>
        <div className="flex h-[12px] justify-center border-y border-black bg-linear-to-r from-[#ffff00] to-[#557a00] leading-[10px] text-[#232]"><Fit w={44}>Gamma Ray</Fit></div>
      </div>
    </div>
  </div>
);
const Distance = ({ t }) => (
  <div className="flex h-[17px] w-[72px] shrink-0 items-center justify-between font-['Liberation_Sans',sans-serif] text-[14px]">
    <Svg s={9} v={9}><path d="M0 4.500L5 .5v8z" fill="#000" /><path d="M3 4.500h6" stroke="#000" strokeWidth="1.500" /></Svg>
    <Fit w={51}>{t}</Fit>
    <Svg s={9} v={9}><path d="M9 4.500L4 .5v8z" fill="#000" /><path d="M0 4.500h6" stroke="#000" strokeWidth="1.500" /></Svg>
  </div>
);

/* ---------- well tracks ---------- */
const B = "#0066ff", G = "#00ff00", Y = "#ffff00", K = "#000000", L = "#ccff00", P = "#4b0082";
const depthY = (d) => 483 + (d - 3000) * 0.09128;
const rng = (seed) => () => ((seed = (seed * 1664525 + 1013904223) >>> 0) / 4294967296);

const WELLS = [
  {
    x: 551.5, paren: 6000, seed: 7,
    gr: [[427, 605, 4], [437, 607, 5], [455, 611, 8], [470, 612, 7], [483, 617, 4], [500, 616, 4], [512, 628, 4], [535, 634, 4], [560, 636, 3], [600, 637, 2], [640, 639, 3], [647, 630, 3], [651, 648, 1], [653, 605, 2], [660, 608, 3], [668, 612, 7], [680, 636, 4], [685, 634, 5], [690, 612, 10], [700, 609, 12], [710, 622, 11], [718, 633, 9], [722, 620, 11], [725, 640, 5], [728, 646, 6], [730, 643, 1], [742, 643, 0.5]], gaps: [],
    litho: [[439, 467, B], [467, 472, G], [472, 480, B], [480, 485, G], [485, 492, B], [492, 498, G], [498, 501, B], [501, 508, G], [508, 514, B], [514, 653, G], [653, 673, B], [673, 677, G], [677, 680, K], [680, 684, G], [684, 699, Y], [699, 739, G]],
    names: [["Carbonate", 451, 1], ["Shale", 581], ["Carbonate", 661, 1], ["Sandstone", 690], ["Shale", 718]],
    boxes: [
      [472.5, 510.5, 1222.5, [["3090' presence Turborotalia cerrozulensis, Hantkenina spp.,", 418], ["Globigerina eocaena, Globigerina hagni, Globigerina linaperta", 434]]],
      [512.5, 531.5, 1021.5, [["3150' FDO Discoaster saipanensis", 237.5]]],
      [533.5, 552.5, 1044.5, [["3450' FDO Cribrocentrum reticulatum", 261.5]]],
      [554.5, 573.5, 997.5, [["3810' Sphenolithus intercalaris", 214.5]]],
      [591.5, 629.5, 1151.5, [["3810-4980' presence Globigerinatheka semiinvoluta,", 362.5], ["Globigerinatheka mexicana", 190]]],
      [656.5, 675.5, 1181.5, [["5000' presence Morozovella spp., Truncorotaloides rohri", 393]]],
      [677.5, 696.5, 899.5, [["5004' Assilina sp.", 119]]],
      [698.5, 717.5, 1121.5, [["5000-5180' Turborotalia cerroazulensis pomeroli", 335]]],
      [719.5, 738.5, 982.5, [["5180' Hantkenina cf. dumblei", 199]]],
      [740.5, 759.5, 983.5, [["5480' Helicosphaera heezeni'", 201]]],
      [761.5, 780.5, 1007.5, [["5825' Cribrocentrum reticulatum", 225.5]]],
    ],
    links: [[497.5, 522], [524.5, 543], [557.5, 563], [557.5, 591.5], [664.5, 629.5], [665.5, 665.5], [665.5, 687], [665.5, 698.5], [682.5, 717], [682.5, 729], [709.5, 750], [741.5, 771]],
    stubs: [],
  },
  {
    x: 1323.5, paren: 8100, seed: 21,
    gr: [[348, 1365, 1], [352, 1371, 2], [360, 1376, 3], [380, 1379, 2], [395, 1384, 3], [420, 1384, 2], [440, 1384, 3], [443, 1377, 2], [470, 1380, 2], [480, 1385, 2], [520, 1387, 1.5], [533, 1387, 1], [540, 1378, 2], [555, 1374, 2], [560, 1370, 3], [575, 1371, 4], [578, 1365, 1], [595, 1367, 2], [598, 1370, 2], [600, 1380, 8], [605, 1376, 9], [610, 1384, 4], [630, 1384, 4], [635, 1374, 8], [650, 1380, 7], [656, 1370, 6], [690, 1376, 8], [715, 1380, 9], [725, 1372, 8], [737, 1368, 6], [743, 1376, 3], [750, 1386, 1], [757, 1376, 1], [775, 1375, 1.5], [800, 1373, 3], [820, 1378, 3], [824, 1364, 7], [835, 1374, 8], [842, 1382, 3], [870, 1378, 5], [900, 1382, 5], [920, 1385, 3], [930, 1380, 7], [935, 1362, 1], [947, 1361, 1]], gaps: [[652.5, 656]],
    litho: [[352, 936, G], [390, 391, B], [407, 408, B], [415, 416, B], [455, 456, Y], [458, 459, B], [466, 467, B],
      [488, 521, B], [492, 493, G], [499, 500, G], [511, 512, G], [517, 518, G], [524, 525.5, B], [527, 528, B], [530, 531, B], [533, 534, B], [535, 540, B], [541, 542, B], [557, 559, B],
      [573, 574, B], [576, 578, B], [580, 581.5, B], [583, 589, B], [584, 585, G], [586.5, 587.500, G], [592, 594, B], [595.5, 597, B], [598, 601, B], [601.5, 602.5, Y], [603, 604, B], [605, 606, Y], [606, 608, B], [615, 618, B], [622, 623, Y], [624, 625.5, B], [627, 628, Y], [632, 633, Y], [637, 639, B], [640, 641, Y], [642.5, 646, B], [649, 651, Y], [652, 653, B], [655, 656, Y], [658, 659, Y], [660, 661, Y], [666, 667, B], [667, 675, Y], [669, 670, G],
      [680.5, 681.5, Y], [684, 685.5, Y], [688, 689, Y], [690, 692, "#3a30b0"], [694, 695, Y], [696, 697, B], [698, 699, Y], [707, 708.5, Y], [711, 712, Y], [717, 718.500, Y], [721, 724, Y], [727, 728, Y], [730, 731.5, Y], [738, 742, Y], [751, 752, Y], [762, 767, L], [773, 775, L], [797, 798, Y], [800, 801, Y], [802.500, 803.500, Y],
      [823, 825, K], [826.5, 827.500, K], [830, 832, K], [838, 840, K], [842, 847, K], [848, 851, K], [850, 850.6, G], [865, 866, K], [867, 868, Y], [869, 870, Y], [875, 876, Y], [881, 882, Y], [890, 891, Y], [893, 894, Y], [896, 897, Y], [921, 923, Y], [930, 932, Y], [937, 955, P]],
    names: [["Shale", 365], ["Shale", 381], ["Shale", 398], ["Shale", 434], ["Shale", 476], ["Shale", 547], ["Shale", 564], ["Shale", 783], ["Shale", 815], ["Shale", 858], ["Shale", 911]],
    boxes: [
      [465.5, 503.5, 1947.5, [["3010' high occur. Hantkenina alabamensis, Turborotalia", 385.7], ["cerrozulensis cocoaensis", 177]]],
      [505.5, 524.5, 1848.5, [["3040' high occur. Cribrohantkenina inflata", 290.3]]],
      [526.5, 545.5, 1986.5, [["3100' high occur. Turborotalia cerroazulensis  cerroazulensis", 425.5]]],
      [547.5, 566.5, 1938.5, [["3190' high occur. Turborotalia cerroazulensis centralis", 378]]],
      [568.5, 587.5, 1965.5, [["3340' lowest occur. Turborotalia cerrozulensis cocoaensis", 404.6]]],
      [589.5, 608.5, 1869.5, [["3520' high occur. Globigerinatheka tropicalis", 310]]],
      [610.5, 629.5, 1894.5, [["3580' high occur. Globigerinatheka semiinvoluta", 334.7]]],
      [631.5, 650.5, 1905.5, [["4540' high occur. Truncorotaloides pseudodubius", 345.6]]],
      [652.5, 671.5, 1760.5, [["4580' high occur. T. topilensis", 205.5]]],
      [678.5, 697.5, 1819.5, [["5240' hih occur. Verrucatosporites sp.", 262.7]]],
      [719.5, 738.5, 1878.5, [["5690' high occur. Spinizonocolpites echinatus", 319.4]]],
      [760.5, 779.5, 1895.5, [["6140' high occur. Lanagiopollis ?microrugulatus", 335.4]]],
      [801.5, 820.5, 1861.5, [["6590' high occur. Proxapertites operculatus", 302.5]]],
      [822.5, 841.5, 1878.5, [["6770' high occur. Spinizonocolpites baculatus", 319.4]]],
      [843.5, 862.5, 1875.5, [["6860' presence Echimonocolpites ?scabratus", 315.6]]],
      [864.5, 883.5, 1780.5, [["6950' high occur. Discoidites sp.", 224.4]]],
      [885.5, 904.5, 1889.5, [["7400' presence Retistephanocolpites ?williamsi", 329.6]]],
      [906.5, 925.5, 1784.5, [["7670' high occur. Tricolpites spp.", 229.3]]],
    ],
    links: [[486.5, 513], [492.5, 535], [500.5, 556], [514.5, 577], [530.5, 598], [536.5, 619], [623.5, 640], [627.5, 661], [687.5, 687.5], [728.5, 728.5], [769.5, 769.5], [811, 811], [827.5, 832], [835.5, 852.5], [843.5, 873.5], [884.5, 894.5], [909.5, 916]],
    stubs: [],
  },
  {
    x: 2095.5, paren: 11100, seed: 43,
    gr: [[353, 2136, 1], [380, 2134, 1.5], [500, 2136, 1.5], [512, 2138, 1.5], [520, 2143, 3], [530, 2147, 4], [540, 2144, 5], [560, 2148, 4], [620, 2150, 5], [660, 2149, 5], [700, 2149, 5], [709, 2148, 5], [713, 2138, 3], [740, 2137, 3], [800, 2136, 3], [830, 2137, 3], [880, 2137, 3], [890, 2142, 3], [930, 2138, 3], [960, 2142, 4], [990, 2141, 3], [1035, 2141, 4], [1042, 2136, 8], [1048, 2142, 4], [1080, 2140, 5], [1120, 2142, 3], [1130, 2142, 8], [1170, 2140, 8], [1195, 2139, 8], [1200, 2148, 4], [1215, 2152, 4], [1224, 2162, 5], [1230, 2160, 5], [1238, 2152, 4]], gaps: [[1123, 1126]],
    litho: [[514, 836, G], [572, 573, K], [836, 875, B], [875, 883, G], [883, 889, B], [889, 905, G], [905, 918, B], [918, 1024, L], [1024, 1032, Y], [1032, 1115, G], [1115, 1165, Y], [1165, 1197, G], [1197, 1238, L]],
    names: [["Shale", 542], ["Shale", 703], ["Carbonate", 854, 1], ["Shale", 896], ["Carbonate", 910, 1], ["Siltstone", 970], ["Shale", 1072], ["Sandstone", 1139], ["Shale", 1180], ["Siltstone", 1217]],
    boxes: [
      [873.5, 911.5, 2719.5, [["7480' high occur. Hantkenina alabamensis, Turborotalia", 386], ["cerroazulensis", 102.5]]],
      [913.5, 932.5, 2544.5, [["7540' high occur. T. cocoaensis", 217]]],
      [934.5, 953.5, 2620.5, [["7600' high occur. Cribrohantkenina inflata", 291]]],
      [955.5, 993.5, 2655.5, [["7780' high occur. Spinizonocolpites echinatus,", 323.7], ["Verrucatosporites sp.", 149.6]], true],
      [995.5, 1014.5, 2666.5, [["7810' high occur. Globigerinatheka semiinvoluta", 334.7]]],
      [1016.5, 1054.5, 2734.5, [["8210' (SWC) high occur. Proxapertites sp., P. operculatus,", 400.6], ["Echimonocolpites sp.", 150.6]]],
      [1056.5, 1093.5, 2778.5, [["8332' G. tropicalis, Hantkenina alabamensis, Pseudohastigerina", 445], ["micra", 38.7]]],
      [1096.5, 1114.5, 2577.5, [["8332' Spinizonocolpites prominatus", 250]]],
      [1117.5, 1173.5, 2768.5, [["8332' (SWC) lowest planktonic foram, abundant primitive", 396], ["agglutinated (Haplophragmoides) associated common miliolid", 435.7], ["and other calcareous benthonic", 221]]],
      [1175.5, 1232.5, 2777.5, [["8520' Calcareous benthonic absent, abundant microgastropods", 444.6], ["Proxapertites sp.", 118], ["Correlation with age from nearby wells ectioin", 321]]],
    ],
    links: [[897.5, 922], [903, 943], [919.5, 973], [922.5, 1004], [958.5, 1035], [970.5, 1074], [970.5, 1105], [970.5, 1143], [987.5, 1201]],
    stubs: [1014.5, 1193.5, 1209.5, 1224.5, 1229.5, 1239.5],
  },
];

function buildLog(well) {
  const rand = rng(well.seed);
  const x0 = well.x + 32;
  const pts = [], bands = [];
  const top = well.gr[0][0], bottom = well.gr[well.gr.length - 1][0];
  let k = 0, smooth = 0;
  for (let y = top; y <= bottom; y += 1) {
    while (k < well.gr.length - 2 && y > well.gr[k + 1][0]) k++;
    const [ya, xa, aa] = well.gr[k], [yb, xb, ab] = well.gr[k + 1];
    const f = (y - ya) / (yb - ya);
    const base = xa + (xb - xa) * f, amp = aa + (ab - aa) * f;
    const r = rand() * 2 - 1;
    const x = base + amp * r * Math.abs(r) * 1.3;
    smooth = smooth * 0.6 + (rand() * 2 - 1) * (amp * 0.42 + 0.3);
    pts.push([x, y]);
    if (!well.gaps.some(([a, b]) => y >= a && y < b)) {
      const v = Math.max(0, Math.min(1, (base + smooth - x0) / 72));
      bands.push([Math.min(x + 1, base + 2), y, `rgb(${Math.round(255 - 235 * v)},${Math.round(252 - 180 * v)},0)`]);
    }
  }
  return { bands, line: "M" + pts.map(([x, y]) => `${x.toFixed(1)} ${y}`).join("L") };
}

function Track({ well }) {
  const { x } = well;
  const { bands, line } = buildLog(well);
  const gr = x + 32, li = x + 104, cm = x + 162, right = x + 699;
  const bx = Math.round(x + 216) - 0.5 + (x > 600 ? 0 : 0.5);
  const ticks = [];
  for (let i = 0; i <= 230; i++) {
    const y = depthY(1000 + i * 50);
    if (y < 1354) ticks.push([y, i % 10 === 0]);
  }
  const labels = [["928", 299]];
  for (let d = 1500; d <= 12000; d += 500) labels.push([d >= well.paren ? `(${d})` : `${d}`, depthY(d)]);
  labels.push(["(12551.5)", 1349.5]);
  return (
    <g>
      <rect x={x} y="294" width="699" height="1061" fill="#fff" />
      <rect x={x} y="294" width="32" height="64" fill="#e2e2e2" />
      <rect x={x} y="952" width="32" height="403" fill="#e2e2e2" />
      <path d={`M${x} 294.5h32M${x} 358.500h32M${x} 952.500h32`} stroke="#777" />
      {[1, 2, 3, 4].map((i) => <path key={i} d={`M${gr + i * 14.5} 294V1244`} stroke="#e2e2e2" />)}
      {[1000, 2000, 3000, 4000, 5000, 6000, 7000, 8000, 9000, 10000, 11000].map((d) => <path key={d} d={`M${gr} ${Math.round(depthY(d)) + 0.5}h72`} stroke="#c8c8c8" />)}
      <g shapeRendering="crispEdges">
        {bands.map(([bx0, y, c]) => <rect key={y} x={bx0} y={y} width={li - bx0} height="1" fill={c} />)}
        {well.litho.map(([a, b, c], i) => <rect key={i} x={li} y={a} width="58" height={b - a} fill={c} />)}
      </g>
      <path d={line} stroke="#000" strokeWidth="1.500" fill="none" />
      <path d={`M${x} 294V1355M${right} 294V1355M${gr} 294V1355M${li} 294V1244M${cm} 294V1243.500H${right}`} stroke="#000" strokeWidth="1.200" fill="none" />
      {ticks.map(([y, major], i) => <path key={i} d={`M${gr - (major ? 5 : 3)} ${Math.round(y) + 0.5}H${gr}`} stroke="#000" />)}
      {labels.map(([t, y]) => <text key={t} x={x + 14} y={y + 2.800} textAnchor="middle" fontSize={t.length > 7 ? 6 : 8} fill="#000">{t}</text>)}
      {well.names.map(([t, y, light], i) => <text key={i} x={li + 28} y={y + 3} textAnchor="middle" fontSize="8.500" fill={light ? "#fff" : "#012401"}>{t}</text>)}
      {well.links.map(([a, b], i) => <path key={i} d={`M${cm} ${a}H${cm + 11}L${bx} ${b}`} stroke="#000" fill="none" />)}
      {well.stubs.map((y) => <path key={y} d={`M${cm} ${y}h11`} stroke="#000" />)}
      {well.boxes.map(([a, b, r, rows, open], i) => (
        <g key={i}>
          <rect x={bx} y={a} width={r - bx} height={b - a} fill="#ffffa8" />
          <path d={open ? `M${r} ${a}H${bx}V${b}H${r}` : `M${bx} ${a}H${r}V${b}H${bx}z`} stroke="#000" fill="none" />
          {rows.map(([t, w], j) => <text key={j} x={bx + 2} y={a + 13 + j * (rows.length === 3 ? 18.700 : 19)} fontSize="15.500" fontWeight="bold" fill="#000" textLength={w} lengthAdjust="spacingAndGlyphs" xmlSpace="preserve">{t}</text>)}
        </g>
      ))}
    </g>
  );
}

const NOTE = [["Backgrou", 40, 0], ["objects", 31, 11], ["are only disp", 53, 23], ["when all wel", 53, 34], ["in SSTVD or", 52, 45]];
const Pick = ({ x, y, c }) => <g stroke={c} fill="none" strokeWidth="1.200"><circle cx={x} cy={y} r="5" /><path d={`M${x - 6} ${y}h12M${x} ${y - 6}v12`} /></g>;
const Line = ({ d, flat, c, glow }) => (<g fill="none"><path d={flat} stroke={glow} strokeWidth="3" opacity=".45" /><path d={d} stroke={c} strokeWidth="1" /></g>);

function Section() {
  return (
    <svg viewBox="372 294 3064 1061" width="3064" height="1061" className="block shrink-0 font-['Liberation_Sans',sans-serif]">
      <rect x="372" y="294" width="3064" height="1061" fill="#aaaaaa" />
      <rect x="372" y="294" width="2618" height="950" fill="#f0f0f0" />
      {[1251, 2023].map((gx) => (
        <g key={gx}>
          <rect x={gx} y="294" width="72" height="950" fill="#fff" />
          {[296, 518, 740, 961, 1183].map((y) => NOTE.map(([t, w, dy]) => (
            <text key={t + y} x={gx + 72 - w} y={y + dy + 4} fontSize="11.500" fill="#8c8c8c" textLength={w} lengthAdjust="spacingAndGlyphs">{t}</text>
          )))}
        </g>
      ))}
      {WELLS.map((w) => <Track key={w.x} well={w} />)}
      <Line d="M543 491.500H1251L1323 484.500H2022.500L2095.500 892.500H2804" flat="M551 491.500H1251M1323 484.500H2022.500M2095.500 892.500H2795" c="#0486c4" glow="#7cc8ec" />
      <Line d="M543 665.500H1251L1323 624.500H2022.500L2095.500 970.500H2804" flat="M551 665.500H1251M1323 624.500H2022.500M2095.500 970.500H2795" c="#10c08c" glow="#5cdcb8" />
      <Line d="M1323 811.500H2022.500L2095.500 1012.500H2804" flat="M1323 811.500H2022.500M2095.500 1012.500H2795" c="#8cc408" glow="#b8e060" />
      <Line d="M1323 937.500H2022.500" flat="M1323 937.500H2022.500" c="#bf9138" glow="#e0b870" />
      <Line d="M2095.500 1239.500H2804" flat="M2095.500 1239.500H2795" c="#c880cc" glow="#ecbcec" />
      <Pick x={537} y={491.5} c="#2a9cd0" /><Pick x={537} y={665.5} c="#30cc9c" />
      <Pick x={2810} y={892.5} c="#2a9cd0" /><Pick x={2810} y={970.5} c="#30cc9c" /><Pick x={2810} y={1012.5} c="#a0cc28" /><Pick x={2810} y={1239.5} c="#cc80d0" />
      <g fontSize="11" fill="#111">
        {[["Late Eocene", 473, 491.5, 58], ["Middle Eocene", 463, 665.5, 68], ["Late Eocene", 2816, 892.5, 58], ["Middle Eocene", 2816, 970.5, 68], ["Paleocene", 2816, 1012.5, 49], ["Late Cretaceous", 2816, 1239.5, 79]].map(([t, x, y, w], i) => (
          <text key={i} x={x} y={y + 4} textLength={w} lengthAdjust="spacingAndGlyphs">{t}</text>
        ))}
      </g>
    </svg>
  );
}

function DocumentArea() {
  return (
    <div className="flex h-full w-[3064px] flex-col bg-[#f0f0f0]">
      <DocTabs />
      <ToolStrip />
      <div className="mt-[7px] flex h-[89px] shrink-0">
        <Gap w={179} />
        <WellHeader name="Terobosan-1 [TVD]" nw={112} dark /><Distance t="42383 m" /><WellHeader name="L49-1 [TVD]" nw={69} /><Distance t="25218 m" /><WellHeader name="L46-1 [TVD]" nw={70} />
        <div className="ml-auto w-[446px] bg-[#aaaaaa]" />
      </div>
      <div className="h-[3px] shrink-0 bg-[#e2e2e2]" />
      <Section />
      <div className="flex h-[17px] items-center border-t border-white bg-[#f0f0f0] pl-[6px]"><Svg s={8} v={8}><path d="M6.500 0v8L1 4z" fill="#999" /></Svg></div>
    </div>
  );
}

function StatusBar() {
  return (
    <div className="flex h-[18px] w-full items-center justify-end border-t border-[#7c8ca4] bg-[#e7e7e7] text-[11px] text-[#222]">
      <span className="flex h-[15px] items-center border border-[#999] px-[2px]"><Fit w={24}>RAM</Fit></span><Gap w={2} /><span className="h-[13px] w-[16px] border border-[#555] bg-[#808080]" /><Gap w={4} />
      <span className="flex h-[15px] items-center border border-[#999] px-[2px]"><Fit w={28}>USER</Fit></span><Gap w={3} /><span className="h-[13px] w-[16px] border border-[#333] bg-[#505860]" /><Gap w={3} />
      <Svg s={14} v={16}><circle cx="8" cy="8" r="7" fill="#2a9cc8" stroke="#0c5c84" /><path d="M8 3v10M3 8h10" stroke="#d8f0f8" strokeWidth="1.500" /></Svg>
    </div>
  );
}

export default function App() {
  return (
    <div className="flex h-[1390px] w-[3436px] flex-col overflow-hidden bg-[#ececec] font-['Open_Sans','Noto_Sans',sans-serif]">
      <TitleBar />
      <TabBar />
      <Ribbon />
      <div className="h-[2px] w-full bg-[#505050]" />
      <div className="flex h-[1229px]">
        <Rail />
        <LeftPanels />
        <div className="h-full w-[5px] border-r border-[#aaa] bg-[#e8eaec]" />
        <DocumentArea />
      </div>
      <StatusBar />
    </div>
  );
}
